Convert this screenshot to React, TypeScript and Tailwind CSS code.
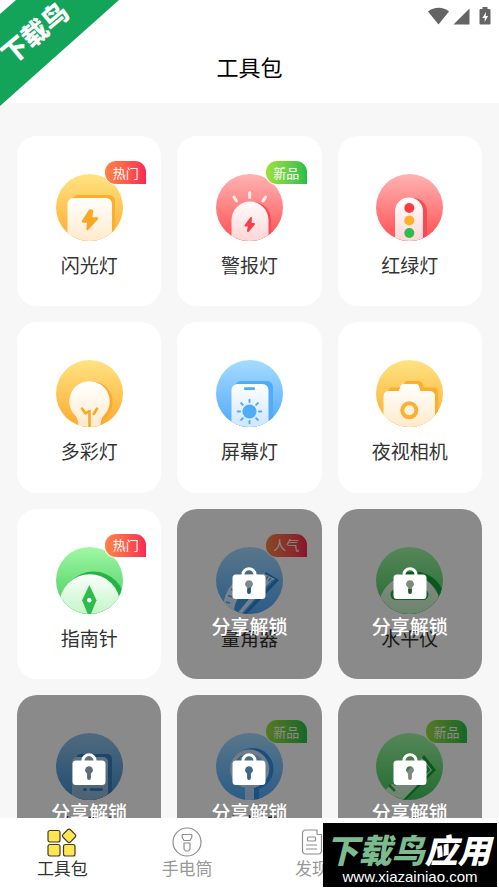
import React, { ReactNode } from "react";

type Tone = "yellow" | "red" | "blue" | "green" | "navy";

type Tool = {
  name: string;
  tone: Tone;
  art: ReactNode;
  badge?: { text: string; className: string };
  locked?: boolean;
};

const tones: Record<Tone, [string, string, string]> = {
  // top, bottom, paper tint
  yellow: ["#ffe382", "#fdaa2e", "#ffeacb"],
  red: ["#ffb3b3", "#ff4f52", "#ffd5d5"],
  blue: ["#a6dbff", "#4fa9fa", "#cde6ff"],
  green: ["#a0f8a4", "#3fc85a", "#c4f5c8"],
  navy: ["#94c4ea", "#3f8fd0", "#8db4d8"],
};

const hot = { text: "热门", className: "from-[#ff8244] to-[#fb2552]" };
const fresh = { text: "新品", className: "from-[#9be23a] to-[#1fc04a]" };
const popular = { text: "人气", className: "from-[#ff8244] to-[#fb2552]" };

const rays = [0, 45, 90, 135, 180, 225, 270, 315];

const tools: Tool[] = [
  {
    name: "闪光灯",
    tone: "yellow",
    badge: hot,
    art: (
      <>
        <rect x="16" y="21" width="43" height="60" rx="6" fill="#fdae2a" />
        <rect x="11.5" y="24" width="44.5" height="60" rx="6" fill="url(#paper-yellow)" />
        <path
          d="M34 36.5 27 47.5h5.5L31.5 55l9.5-10.5h-6L36 37z"
          fill="#f9a825"
          stroke="#f9a825"
          strokeWidth="2.5"
          strokeLinejoin="round"
        />
      </>
    ),
  },
  {
    name: "警报灯",
    tone: "red",
    badge: fresh,
    art: (
      <>
        <path d="M19 70V46a18 18 0 0 1 36 0v24z" fill="#f84a50" />
        <path d="M15.5 70V46a18.5 18.5 0 0 1 37 0v24z" fill="url(#paper-red)" />
        <path
          d="M33.7 18.5v5M18 23l2.5 4M49.500 23l-2.500 4"
          stroke="#ffeeee"
          strokeWidth="3"
          strokeLinecap="round"
        />
        <path
          d="M35 44l-5.5 7.5h3.5L32 57l6-7h-3.5z"
          fill="#f5414a"
          stroke="#f5414a"
          strokeWidth="2"
          strokeLinejoin="round"
        />
      </>
    ),
  },
  {
    name: "红绿灯",
    tone: "red",
    art: (
      <>
        <path d="M23 70V38a14 14 0 0 1 28 0v32z" fill="#f84a50" />
        <path d="M19 70V37.5a14 14 0 0 1 28 0V70z" fill="url(#paper-red)" />
        <circle cx="33.3" cy="34" r="5" fill="#f93c3f" />
        <circle cx="33.3" cy="46.5" r="5" fill="#fcb02c" />
        <circle cx="33.3" cy="59" r="5" fill="#2dbd4b" />
      </>
    ),
  },
  {
    name: "多彩灯",
    tone: "yellow",
    art: (
      <>
        <path d="M36 21.5a20.5 20.5 0 0 1 16 33.5c-3 4-6 6-7 12H26z" fill="#fca82b" />
        <path
          d="M33.5 21.3a20 20 0 0 1 14.5 34c-2.5 3-3.5 6-3.5 12h-22c0-6-1-9-3.5-12a20 20 0 0 1 14.500-34z"
          fill="url(#paper-yellow)"
        />
        <path
          d="M26 48.5l3.5 5 4-2.5v16M41 48.5L37.8 54"
          fill="none"
          stroke="#f9a825"
          strokeWidth="2.6"
          strokeLinecap="round"
          strokeLinejoin="round"
        />
      </>
    ),
  },
  {
    name: "屏幕灯",
    tone: "blue",
    art: (
      <>
        <rect x="19" y="21" width="38" height="60" rx="6" fill="#4facf8" />
        <rect x="15.5" y="24" width="37" height="60" rx="6" fill="url(#paper-blue)" />
        <rect x="28" y="27.3" width="11" height="2.6" rx="1" fill="#4facf8" />
        <circle cx="33.5" cy="51.5" r="7" fill="#4facf8" />
        {rays.map((deg) => (
          <path
            key={deg}
            d="M33.5 42v-2.300"
            transform={`rotate(${deg} 33.5 51.5)`}
            stroke="#4facf8"
            strokeWidth="2"
            strokeLinecap="round"
          />
        ))}
      </>
    ),
  },
  {
    name: "夜视相机",
    tone: "yellow",
    art: (
      <>
        <path
          d="M12 70V32a4.5 4.5 0 0 1 4.5-4.5H27l1.5-4.500a3 3 0 0 1 3-2H43a3 3 0 0 1 3 2l1.500 4.500H57a5 5 0 0 1 5 5V70z"
          fill="#fdae2a"
        />
        <path
          d="M7.5 75V36a5 5 0 0 1 5-5H23l1.500-5a3 3 0 0 1 3-2H40a3 3 0 0 1 3 2l1.500 5H54a5 5 0 0 1 5 5v39z"
          fill="url(#paper-yellow)"
        />
        <circle cx="33.3" cy="50.3" r="7" fill="none" stroke="#fcb132" strokeWidth="4" />
      </>
    ),
  },
  {
    name: "指南针",
    tone: "green",
    badge: hot,
    art: (
      <>
        <circle cx="37.5" cy="56" r="31.5" fill="#24b344" />
        <circle cx="33.8" cy="57.7" r="30.4" fill="url(#paper-green)" />
        <path d="M33.3 38l7.2 15.3L33.300 71l-7.200-17.700z" fill="#2dbd4b" />
        <circle cx="33.3" cy="53.3" r="2.2" fill="#fff" />
      </>
    ),
  },
  {
    name: "量角器",
    tone: "blue",
    locked: true,
    badge: popular,
    art: (
      <>
        <path d="M7 61C8 42 20 27 41 27l14 4-34 38z" fill="url(#paper-blue)" />
        <path d="M18 66c0-13 8-24 20-27l4 6-20 24z" fill="#3f9ff0" />
        <path
          d="M10 55l4 1M12 48.500l4 1.500M15 42l3.500 2.500M19.500 36.500l3 3"
          stroke="#4facf8"
          strokeWidth="1.6"
        />
        <path d="M50 25l13 8-34 36h-9z" fill="#2b86d8" />
        <path d="M47 26l12 6-34 36h-5l24-30z" fill="#d9ecff" />
        <path d="M57 33L27 66" stroke="#4facf8" strokeWidth="1.5" />
        <path d="M52 29l-2 3M55 31l-2.500 3" stroke="#4facf8" strokeWidth="1.5" />
      </>
    ),
  },
  {
    name: "水平仪",
    tone: "green",
    locked: true,
    art: (
      <>
        <circle cx="38" cy="56" r="31.5" fill="#16a336" />
        <circle cx="33.8" cy="59" r="30.5" fill="url(#paper-green)" />
        <rect x="14.5" y="42" width="38" height="11" rx="5.5" fill="#24b344" />
      </>
    ),
  },
  {
    name: "分贝仪",
    tone: "navy",
    locked: true,
    art: (
      <>
        <rect x="20" y="21" width="36" height="60" rx="5" fill="#3480c0" />
        <rect x="16" y="24" width="36" height="60" rx="5" fill="url(#paper-navy)" />
        <path
          d="M28.500 56.500h1M35 56.500h10.500"
          stroke="#3183c4"
          strokeWidth="3"
          strokeLinecap="round"
        />
      </>
    ),
  },
  {
    name: "放大镜",
    tone: "blue",
    locked: true,
    badge: fresh,
    art: (
      <>
        <circle cx="36.5" cy="36" r="19" fill="none" stroke="#3291e6" strokeWidth="4" />
        <path d="M36 53h7v15h-7z" fill="#3291e6" />
        <circle cx="33.5" cy="36" r="17.5" fill="none" stroke="#cde6ff" strokeWidth="4" />
        <path d="M29 53h9v15h-9z" fill="#b4d9fb" />
      </>
    ),
  },
  {
    name: "直尺",
    tone: "green",
    locked: true,
    badge: fresh,
    art: (
      <>
        <path d="M48 22l12 15-33 33-8-6z" fill="#16a336" />
        <path d="M46 25l10 12-33 34-15-13z" fill="url(#paper-green)" />
        <path
          d="M13 52l6 6M17 49l3 3M49 32l4 5-6 6"
          fill="none"
          stroke="#24b344"
          strokeWidth="2.5"
        />
      </>
    ),
  },
];

const Gradients = () => (
  <svg className="absolute h-0 w-0" aria-hidden="true">
    <defs>
      {(Object.keys(tones) as Tone[]).map((tone) => (
        <React.Fragment key={tone}>
          <linearGradient id={`disc-${tone}`} x1="0" y1="0" x2="0" y2="1">
            <stop offset="0" stopColor={tones[tone][0]} />
            <stop offset="1" stopColor={tones[tone][1]} />
          </linearGradient>
          <linearGradient
            id={`paper-${tone}`}
            gradientUnits="userSpaceOnUse"
            x1="0"
            y1="24"
            x2="0"
            y2="67"
          >
            <stop offset="0" stopColor={tone === "navy" ? "#b5d2ea" : "#ffffff"} />
            <stop offset="1" stopColor={tones[tone][2]} />
          </linearGradient>
        </React.Fragment>
      ))}
      <clipPath id="disc-clip">
        <circle cx="33.5" cy="33.5" r="33.5" />
      </clipPath>
    </defs>
  </svg>
);

const LockIcon = () => (
  <svg className="h-8 w-[34px]" viewBox="0 0 34 32" aria-hidden="true">
    <path
      d="M11 9V7.500a6 5.800 0 0 1 12 0V9"
      fill="none"
      stroke="#fff"
      strokeWidth="3"
    />
    <path
      fillRule="evenodd"
      fill="#fff"
      d="M4 7.500h26a3.500 3.500 0 0 1 3.500 3.500v17.500A3.500 3.500 0 0 1 30 32H4a3.500 3.500 0 0 1-3.500-3.500V11A3.500 3.500 0 0 1 4 7.500zM17 13.200a3.900 3.900 0 0 0-1.900 7.300V25a1.900 1.900 0 0 0 3.800 0v-4.500A3.900 3.900 0 0 0 17 13.200z"
    />
  </svg>
);

const ToolCard = ({ tool }: { tool: Tool }) => (
  <button
    type="button"
    className="relative flex aspect-[50/59] flex-col items-center overflow-hidden rounded-[20px] bg-white pt-[38px]"
  >
    <svg className="h-[67px] w-[67px] shrink-0" viewBox="0 0 67 67" aria-hidden="true">
      <g clipPath="url(#disc-clip)">
        <rect width="67" height="67" fill={`url(#disc-${tool.tone})`} />
        {tool.art}
      </g>
    </svg>
    <span className="mt-[9px] text-[19px] leading-[30px] text-[#333333]">{tool.name}</span>
    {tool.badge && (
      <span
        className={`absolute right-[15px] top-[25px] flex h-[23px] w-[41px] items-center justify-center rounded-[11px] rounded-br-none bg-linear-to-r text-[13px] text-white ring-1 ring-white ${tool.badge.className}`}
      >
        {tool.badge.text}
      </span>
    )}
    {tool.locked && (
      <span className="absolute inset-0 flex flex-col items-center bg-black/46 pt-[58px]">
        <LockIcon />
        <span className="mt-[12px] text-[19px] font-medium leading-[30px] text-white">
          分享解锁
        </span>
      </span>
    )}
  </button>
);

const GridIcon = () => (
  <svg className="h-8 w-8" viewBox="0 0 32 32" aria-hidden="true">
    <g fill="#ffe550" stroke="#3f3b2a" strokeWidth="1.2">
      <rect x="2" y="4.5" width="12" height="11.5" rx="2" />
      <rect x="2" y="18.5" width="12" height="11.5" rx="2" />
      <rect x="17.5" y="18.5" width="11.5" height="11.5" rx="2" />
      <rect x="17.8" y="4.5" width="10.5" height="10.5" rx="2" transform="rotate(45 23 9.8)" />
    </g>
  </svg>
);

const TorchIcon = () => (
  <svg className="h-8 w-8" viewBox="0 0 32 32" aria-hidden="true">
    <g fill="none" stroke="#8e8e8e" strokeWidth="1.2" strokeLinejoin="round">
      <circle cx="16" cy="16" r="14" />
      <path d="M11.200 8.500h9.600v3l-1.800 3h-6l-1.800-3z" />
      <path d="M13 17h6v6l-1.500 2h-3L13 23z" />
    </g>
  </svg>
);

const NewsIcon = () => (
  <svg className="h-8 w-8" viewBox="0 0 32 32" aria-hidden="true">
    <g fill="none" stroke="#8e8e8e" strokeWidth="1.2" strokeLinejoin="round">
      <path d="M21 8.500h4.500V25a3 3 0 0 1-3 3H9.500a3 3 0 0 1-3-3V7a3 3 0 0 1 3-3H21v4.500" />
      <rect x="11.500" y="11" width="8" height="4" rx="1" />
      <path d="M10.500 19h10M10.500 23h10" strokeLinecap="round" />
    </g>
  </svg>
);

const tabs = [
  { name: "工具包", icon: <GridIcon />, className: "text-[#333333]" },
  { name: "手电筒", icon: <TorchIcon />, className: "text-[#999999]" },
  { name: "发现", icon: <NewsIcon />, className: "text-[#999999]" },
];

const StatusIcons = () => (
  <svg className="h-[18px] w-[63px]" viewBox="0 0 63 18" fill="#646464" aria-hidden="true">
    <path d="M0 4.500C6-.5 15.500-.5 21 4.500L10.500 17.500z" />
    <path d="M41.500 1.500v16H25.500z" />
    <path
      fillRule="evenodd"
      d="M54.500 0h5v2h2a1 1 0 0 1 1 1v13.500a1 1 0 0 1-1 1h-9a1 1 0 0 1-1-1V3a1 1 0 0 1 1-1h2zM58 5l-3.700 6h2.400v4l3.400-6h-2.400z"
    />
  </svg>
);

const App = () => {
  return (
    <div className="relative flex h-screen flex-col overflow-hidden bg-[#f7f7f7] font-['Noto_Sans_CJK_SC',sans-serif]">
      <Gradients />
      <header className="h-[103px] shrink-0 bg-white">
        <div className="flex h-8 items-center justify-end pr-[8px]">
          <StatusIcons />
        </div>
        <h1 className="mt-[18px] text-center text-[22px] leading-8 text-black">工具包</h1>
      </header>

      <main className="min-h-0 flex-1 overflow-hidden px-[17px] pt-[33px]">
        <div className="grid grid-cols-3 gap-4">
          {tools.map((tool) => (
            <ToolCard key={tool.name} tool={tool} />
          ))}
        </div>
      </main>

      <nav className="grid h-[70px] shrink-0 grid-cols-4 bg-white pt-2">
        {tabs.map((tab) => (
          <button
            key={tab.name}
            type="button"
            className={`flex flex-col items-center text-[17px] leading-5 ${tab.className}`}
          >
            {tab.icon}
            {tab.name}
          </button>
        ))}
      </nav>

      {/* corner ribbon */}
      <div className="absolute left-0 top-0 h-[106px] w-[119px]">
        <svg className="h-full w-full" viewBox="0 0 119 106" aria-hidden="true">
          <path d="M16 0h103L0 106V14z" fill="#13a45a" />
        </svg>
        <span className="absolute left-[-8px] top-[16px] w-[84px] -rotate-40 text-center text-[26px] font-black leading-8 text-white">
          下载鸟
        </span>
      </div>

      {/* site banner */}
      <div className="absolute bottom-px right-[2px] flex h-16 w-[174px] flex-col items-center overflow-hidden bg-black pt-2">
        <p className="whitespace-nowrap pr-1 text-[33px] font-black italic leading-9 text-white">
          <span className="text-[#7cba90]">下载鸟</span>应用
        </p>
        <p className="font-['Liberation_Sans',sans-serif] text-[15px] leading-5 text-white">
          www.xiazainiao.com
        </p>
      </div>
    </div>
  );
};

export default App;
